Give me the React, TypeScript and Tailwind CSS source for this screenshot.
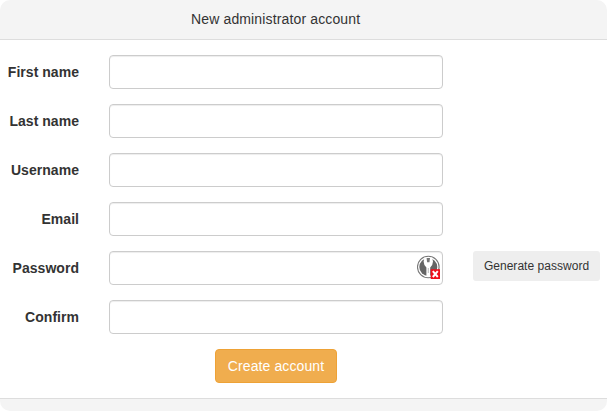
const rows = ["First name", "Last name", "Username", "Email", "Password", "Confirm"];

function BadgeIcon() {
  return (
    <svg className="absolute right-0.5 top-1 size-6" viewBox="0 0 24 24">
      <circle cx="11.3" cy="12" r="10.8" fill="#fff" stroke="#777" strokeWidth="1.1" />
      <circle cx="11.3" cy="12" r="9" fill="#656565" />
      <path d="M7.5 2.5h7.6L16 6.5l-.8 3.5-2 2.5V21H9.4v-8.5l-2-2.5-.8-3.5z" fill="#fff" />
      <path d="M9.6 3h3.4l-.5 4.2h-2.4z" fill="#777" />
      <path d="M11.3 13v5" stroke="#aaa" strokeWidth="0.8" />
      <rect x="13.7" y="14.2" width="9.3" height="9.8" fill="#ee101c" />
      <path d="M15.8 16.2l5 5.8m0-5.8l-5 5.8" stroke="#fff" strokeWidth="2" />
    </svg>
  );
}

export default function App() {
  return (
    <div className="flex h-[411px] w-[607px] flex-col overflow-hidden rounded-[10px] bg-white font-['Liberation_Sans',Arial,sans-serif] text-sm text-[#333]">
      <header className="flex h-10 items-center border-b border-[#ddd] bg-[#f4f4f4] pb-0.5 pl-[191px] tracking-[0.14px]">
        New administrator account
      </header>
      <main className="flex flex-1 flex-col gap-[15px] pt-[15px]">
        {rows.map((label) => (
          <div key={label} className="flex h-[34px] items-center">
            <label className="w-[79px] text-right font-bold tracking-[0.04px]">{label}</label>
            <div className="relative ml-[30px] h-[34px] w-[334px]">
              <input className="block size-full rounded border border-[#ccc] bg-white shadow-[inset_0_1px_1px_rgba(0,0,0,0.075)]" />
              {label === "Password" && <BadgeIcon />}
            </div>
            {label === "Password" && (
              <button className="mb-1 ml-[30px] h-[30px] w-[127px] rounded-[3px] bg-[#eee] text-xs tracking-[0.03px]">Generate password</button>
            )}
          </div>
        ))}
        <button className="ml-[215px] h-[34px] w-[122px] rounded border border-[#eea236] bg-[#f0ad4e] tracking-[0.1px] text-white">Create account</button>
      </main>
      <footer className="h-[13px] border-t border-[#ddd] bg-[#f4f4f4]" />
    </div>
  );
}
